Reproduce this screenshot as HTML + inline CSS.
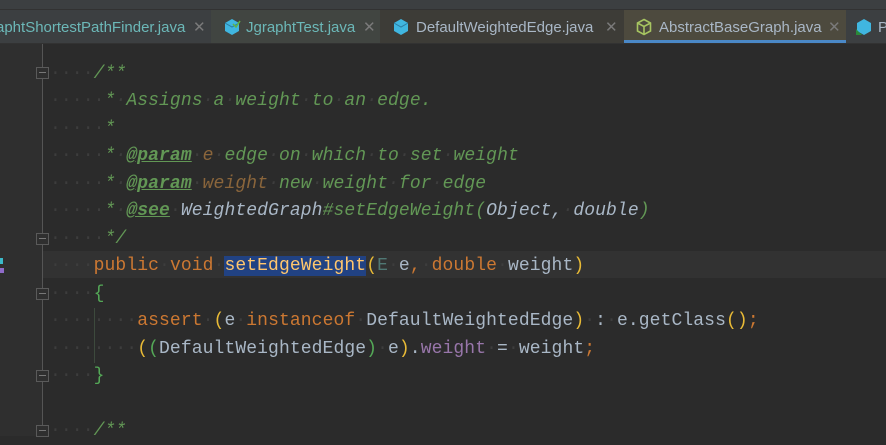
<!DOCTYPE html>
<html><head><meta charset="utf-8"><style>
*{margin:0;padding:0;box-sizing:border-box}
body{width:886px;height:436px;overflow:hidden;background:#2b2b2b;position:relative;font-family:"Liberation Mono",monospace}
.top{position:absolute;left:0;top:0;width:886px;height:10px;background:#3c3f41;border-bottom:1px solid #323232}
.tabs{position:absolute;left:0;top:10px;width:886px;height:34px;background:#3c3f41;border-bottom:1px solid #323232}
.tab{position:absolute;top:0;height:33px;font:15px "Liberation Sans",sans-serif;line-height:36px;white-space:nowrap;overflow:hidden}
.x{position:absolute;top:0;color:#7a7a7a;font-size:15px}
.gut{position:absolute;left:0;top:44px;width:42px;height:392px;background:#2f2f2f}
.gl{position:absolute;left:42px;top:44px;width:1px;height:392px;background:#555}
.cur{position:absolute;left:43px;top:251px;width:843px;height:27px;background:#323232}
.ln{position:absolute;left:50px;font-size:18px;letter-spacing:0.1px;white-space:pre;line-height:27px;color:#a9b7c6}
.d{color:#3d3d3d}
.c{color:#629755;font-style:italic}
.t{color:#629755;font-weight:bold;text-decoration:underline;font-style:italic}
.p{color:#8a653b;font-style:italic}
.r{color:#a9b7c6;font-style:italic}
.k{color:#cc7832}
.y{color:#e8ba36}
.g{color:#54a857}
.f{color:#9876aa}
.e{color:#507874}
.sel{background:#214283;color:#ffc66d}
.fold{position:absolute;left:36px;width:13px;height:12px;border:1px solid #5a5a5a;background:#2f2f2f}
.fold:after{content:"";position:absolute;left:2px;top:4px;width:7px;height:1px;background:#777}
</style></head><body>
<div class="top"></div>
<div class="tabs">
 <div class="tab" style="left:0;width:211px;color:#6cb8b8"><span style="position:absolute;left:-4px">aphtShortestPathFinder.java</span><span class="x" style="left:193px">✕</span></div>
 <div class="tab" style="left:211px;width:169px;background:#414541;color:#6cb8b8">
  <svg style="position:absolute;left:12px;top:8px" width="18" height="18" viewBox="0 0 18 18"><path d="M9 1 L16 5 L16 13 L9 17 L2 13 L2 5 Z" fill="#40b6e0"/><path d="M2 5 L9 9 L16 5" stroke="#2b7aa0" fill="none"/><path d="M10 6 L13 9 L17 3" stroke="#62b543" stroke-width="1.5" fill="none"/></svg>
  <span style="position:absolute;left:35px">JgraphtTest.java</span><span class="x" style="left:152px">✕</span></div>
 <div class="tab" style="left:380px;width:244px;background:#3d3c37;color:#a9b7c6">
  <svg style="position:absolute;left:12px;top:8px" width="18" height="18" viewBox="0 0 18 18"><path d="M9 1 L16 5 L16 13 L9 17 L2 13 L2 5 Z" fill="#40b6e0"/><path d="M2 5 L9 9 L16 5" stroke="#2b7aa0" fill="none"/></svg>
  <span style="position:absolute;left:36px">DefaultWeightedEdge.java</span><span class="x" style="left:225px">✕</span></div>
 <div class="tab" style="left:624px;width:222px;background:#4d4a3e;color:#a9b7c6;height:30px">
  <svg style="position:absolute;left:11px;top:8px" width="18" height="18" viewBox="0 0 18 18"><path d="M9 1.5 L15.5 5 L15.5 13 L9 16.5 L2.5 13 L2.5 5 Z M2.5 5 L9 8.5 L15.5 5 M9 8.5 L9 16.5" stroke="#a7c561" stroke-width="1.6" fill="none"/></svg>
  <span style="position:absolute;left:35px">AbstractBaseGraph.java</span><span class="x" style="left:204px">✕</span></div>
 <div style="position:absolute;left:624px;top:30px;width:222px;height:3px;background:#4a88c7"></div>
 <div class="tab" style="left:846px;width:40px;color:#a9b7c6">
  <svg style="position:absolute;left:9px;top:8px" width="18" height="18" viewBox="0 0 18 18"><path d="M9 1 L16 5 L16 13 L9 17 L2 13 L2 5 Z" fill="#40b6e0"/><path d="M1 11 L7 17 L1 17 Z" fill="#2a8a3a"/></svg>
  <span style="position:absolute;left:32px">P</span></div>
</div>
<div class="gut"></div><div class="gl"></div>
<div class="cur"></div>
<div style="position:absolute;left:0;top:258px;width:3px;height:6px;background:#3bb9c9"></div>
<div style="position:absolute;left:0;top:268px;width:4px;height:5px;background:#8f6bc9"></div>
<div class="fold" style="top:67px"></div>
<div class="fold" style="top:233px"></div>
<div class="fold" style="top:288px"></div>
<div class="fold" style="top:370px"></div>
<div class="fold" style="top:425px"></div>
<div style="position:absolute;left:94px;top:308px;width:1px;height:55px;background:#3d4a3d"></div>
<div class="ln" style="top:61px"><span class="d">····</span><span class="c">/**</span></div>
<div class="ln" style="top:88px"><span class="d">·····</span><span class="c">*<span class="d">·</span>Assigns<span class="d">·</span>a<span class="d">·</span>weight<span class="d">·</span>to<span class="d">·</span>an<span class="d">·</span>edge.</span></div>
<div class="ln" style="top:116px"><span class="d">·····</span><span class="c">*</span></div>
<div class="ln" style="top:143px"><span class="d">·····</span><span class="c">*<span class="d">·</span></span><span class="t">@param</span><span class="d">·</span><span class="p">e</span><span class="c"><span class="d">·</span>edge<span class="d">·</span>on<span class="d">·</span>which<span class="d">·</span>to<span class="d">·</span>set<span class="d">·</span>weight</span></div>
<div class="ln" style="top:171px"><span class="d">·····</span><span class="c">*<span class="d">·</span></span><span class="t">@param</span><span class="d">·</span><span class="p">weight</span><span class="c"><span class="d">·</span>new<span class="d">·</span>weight<span class="d">·</span>for<span class="d">·</span>edge</span></div>
<div class="ln" style="top:198px"><span class="d">·····</span><span class="c">*<span class="d">·</span></span><span class="t">@see</span><span class="d">·</span><span class="r">WeightedGraph</span><span class="c">#setEdgeWeight(</span><span class="r">Object,<span class="d">·</span>double</span><span class="c">)</span></div>
<div class="ln" style="top:226px"><span class="d">·····</span><span class="c">*/</span></div>
<div class="ln" style="top:253px"><span class="d">····</span><span class="k">public</span><span class="d">·</span><span class="k">void</span><span class="d">·</span><span class="sel">setEdgeWeight</span><span class="y">(</span><span class="e">E</span><span class="d">·</span>e<span class="k">,</span><span class="d">·</span><span class="k">double</span><span class="d">·</span>weight<span class="y">)</span></div>
<div class="ln" style="top:281px"><span class="d">····</span><span class="g">{</span></div>
<div class="ln" style="top:308px"><span class="d">········</span><span class="k">assert</span><span class="d">·</span><span class="y">(</span>e<span class="d">·</span><span class="k">instanceof</span><span class="d">·</span>DefaultWeightedEdge<span class="y">)</span><span class="d">·</span>:<span class="d">·</span>e.getClass<span class="y">()</span><span class="k">;</span></div>
<div class="ln" style="top:336px"><span class="d">········</span><span class="y">(</span><span class="g">(</span>DefaultWeightedEdge<span class="g">)</span><span class="d">·</span>e<span class="y">)</span>.<span class="f">weight</span><span class="d">·</span>=<span class="d">·</span>weight<span class="k">;</span></div>
<div class="ln" style="top:363px"><span class="d">····</span><span class="g">}</span></div>
<div class="ln" style="top:418px"><span class="d">····</span><span class="c">/**</span></div>
</body></html>
